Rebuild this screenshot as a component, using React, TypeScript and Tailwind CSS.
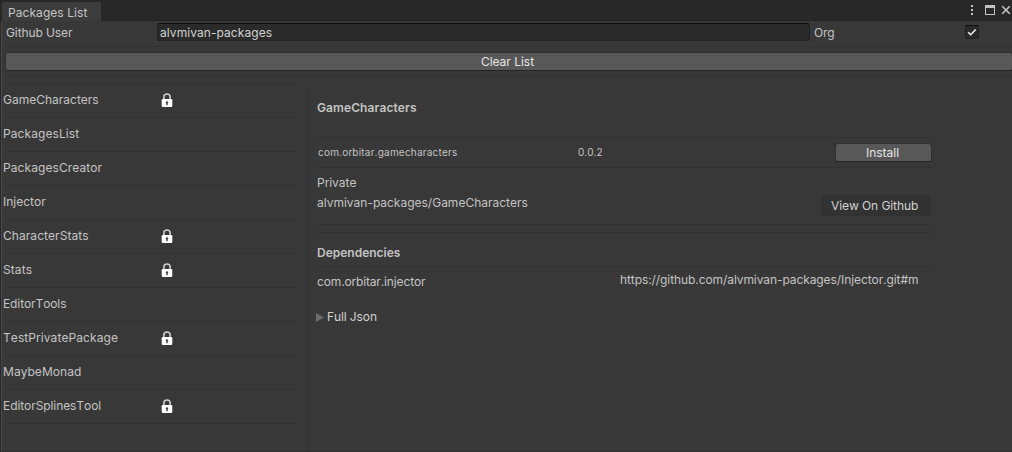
import React from "react";

const packages = [
  { name: "GameCharacters", locked: true, tracking: "tracking-normal" },
  { name: "PackagesList", locked: false, tracking: "tracking-[0.08px]" },
  { name: "PackagesCreator", locked: false, tracking: "tracking-[0.08px]" },
  { name: "Injector", locked: false, tracking: "tracking-normal" },
  { name: "CharacterStats", locked: true, tracking: "tracking-[0.06px]" },
  { name: "Stats", locked: true, tracking: "tracking-[0.1px]" },
  { name: "EditorTools", locked: false, tracking: "tracking-[-0.1px]" },
  { name: "TestPrivatePackage", locked: true, tracking: "tracking-[0.09px]" },
  { name: "MaybeMonad", locked: false, tracking: "tracking-[0.05px]" },
  { name: "EditorSplinesTool", locked: true, tracking: "tracking-[-0.08px]" },
];

function LockIcon() {
  return (
    <svg className="mt-px block h-[15px] w-[12px]" viewBox="0 0 12 15">
      <path d="M2.9 7V3.7a3.1 2.7 0 0 1 6.2 0V7" fill="none" stroke="#d0d0d0" strokeWidth="1.6" />
      <rect x="0.7" y="6" width="10.6" height="8" rx="1.2" fill="#fff" />
      <path d="M6 8.2a1.3 1.3 0 0 1 .7 2.4V12.2H5.3V10.6A1.3 1.3 0 0 1 6 8.2z" fill="#444" />
    </svg>
  );
}

function Line() {
  return <div className="h-px w-full shrink-0 bg-[#323232]" />;
}

function WindowControls() {
  return (
    <div className="flex h-5 items-center">
      <svg className="block h-5 w-[48px]" viewBox="0 0 48 20" shapeRendering="crispEdges">
        <g fill="#c4c4c4">
          <rect x="7" y="5" width="2" height="2" />
          <rect x="7" y="9" width="2" height="2" />
          <rect x="7" y="13" width="2" height="2" />
          <path fillRule="evenodd" d="M21 5h10v10H21zM22 8v6h8V8z" />
        </g>
        <path d="M38.2 6.2l7.6 7.6M45.8 6.2l-7.6 7.6" stroke="#c4c4c4" strokeWidth="1.6" shapeRendering="geometricPrecision" />
      </svg>
    </div>
  );
}

export default function App() {
  return (
    <div className="flex h-[452px] w-[1012px] flex-col overflow-hidden bg-[#383838] font-['Inter',sans-serif] text-[12px] leading-4 whitespace-nowrap text-[#c4c4c4] [font-kerning:none]">
      <header className="flex h-[21px] shrink-0 justify-between border-b border-[#242424] bg-[#282828]">
        <div className="mt-[2px] ml-[2px] h-[19px] w-[99px] rounded-t-[2px] bg-[#3c3c3c] pt-[3px] pl-[6px] tracking-[0.06px]">Packages List</div>
        <WindowControls />
      </header>

      <div className="flex min-h-0 flex-1">
        <div className="w-px shrink-0 bg-[#282828]" />
        <div className="w-px shrink-0 bg-[#484848]" />
        <div className="flex min-w-0 flex-1 flex-col">
          <div className="flex h-[25px] shrink-0 pt-[2px] pl-1">
            <div className="w-[151px] pt-[2px] tracking-[-0.1px]">Github User</div>
            <div className="h-[18px] w-[653px] rounded-[3px] border border-[#212121] border-t-[#0d0d0d] bg-[#2a2a2a] pt-px pl-[2px] tracking-[0.08px] text-[#d2d2d2]">
              alvmivan-packages
            </div>
            <div className="w-[155px] pt-[2px] pl-1 tracking-[-0.2px]">Org</div>
            <div className="mt-[2px] h-[14px] w-[14px] rounded-[2px] border border-[#212121] border-t-[#0d0d0d] bg-[#2a2a2a]">
              <svg className="block h-3 w-3" viewBox="0 0 12 12">
                <path d="M2.2 6.2l2.5 2.5 5-5.2" fill="none" stroke="#eee" strokeWidth="1.6" />
              </svg>
            </div>
          </div>
          <div className="pl-1"><Line /></div>
          <div className="mt-[5px] -mr-px ml-[3px] h-[19px] shrink-0 rounded-[3px] border border-[#303030] border-b-[#242424] bg-[#585858] pt-px pr-[3px] text-center text-[#e6e6e6]">
            Clear List
          </div>
          <div className="mt-[5px] pl-1"><Line /></div>

          <div className="flex min-h-0 flex-1">
            <nav className="w-[304px] shrink-0 pt-[6px]">
              <div className="mr-[9px] pl-1"><Line /></div>
              {packages.map((p) => (
                <div key={p.name} className="mr-[9px] flex h-[34px] flex-col">
                  <div className="flex h-[33px] items-center pb-[2px] pl-px">
                    <span className={`w-[158px] ${p.tracking}`}>{p.name}</span>
                    {p.locked && <LockIcon />}
                  </div>
                  <div className="pl-1"><Line /></div>
                </div>
              ))}
            </nav>

            <main className="mt-[9px] ml-px w-[625px] border-l border-[#323232] pl-[9px]">
              <h1 className="h-[51px] pt-[14px] font-semibold tracking-[0.1px]">GameCharacters</h1>
              <Line />
              <div className="flex h-[29px] items-center text-[10px]">
                <span className="w-[261px] pb-[2px] pl-px tracking-[0.21px]">com.orbitar.gamecharacters</span>
                <span className="w-[257px] pb-[2px]">0.0.2</span>
                <div className="h-[19px] w-[97px] shrink-0 rounded-[3px] border border-[#303030] border-b-[#242424] bg-[#585858] pt-px pr-[2px] text-center text-[12px] text-[#e6e6e6]">
                  Install
                </div>
              </div>
              <Line />
              <div className="flex h-[56px]">
                <div className="w-[504px] pt-[7px] leading-5">
                  <p className="-mt-[2px]">Private</p>
                  <p>alvmivan-packages/GameCharacters</p>
                </div>
                <div className="mt-[27px] h-[21px] w-[110px] bg-[#323232] pt-[3px] pl-[10px] tracking-[-0.08px] text-[#d2d2d2]">View On Github</div>
              </div>
              <Line />
              <div className="h-[7px]" />
              <Line />
              <h2 className="h-[33px] pt-[12px] font-semibold">Dependencies</h2>
              <Line />
              <div className="flex h-[42px]">
                <span className="w-[303px] pt-[7px] tracking-[-0.13px]">com.orbitar.injector</span>
                <span className="pt-[5px] tracking-[-0.08px]">https://github.com/alvmivan-packages/Injector.git#m</span>
              </div>
              <div className="flex items-center">
                <svg className="-ml-px block h-[9px] w-[8px]" viewBox="0 0 8 9">
                  <path d="M0 0l8 4.5L0 9z" fill="#6c6c6c" />
                </svg>
                <span className="pl-[3px] tracking-[-0.1px] text-[#d2d2d2]">Full Json</span>
              </div>
            </main>
          </div>
        </div>
      </div>
      <div className="h-px shrink-0 bg-[#303030]" />
    </div>
  );
}
